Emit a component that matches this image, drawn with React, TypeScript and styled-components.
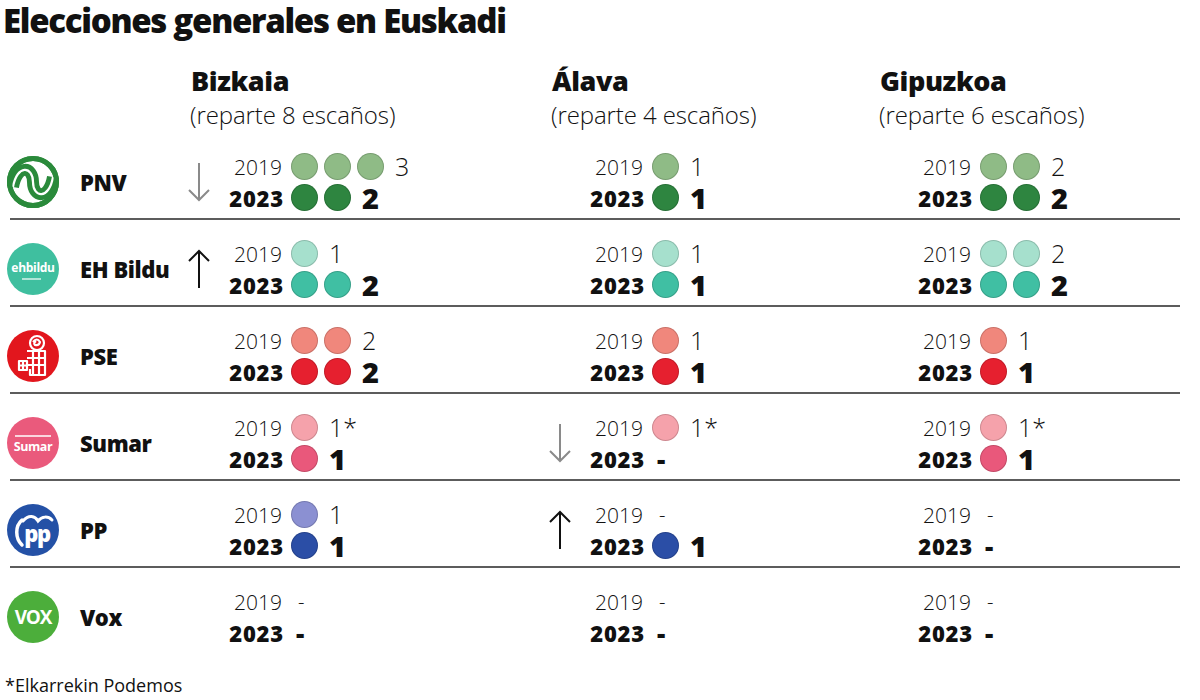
import React from 'react';
import styled, { createGlobalStyle } from 'styled-components';

const GlobalStyle = createGlobalStyle`
  html, body { margin: 0; padding: 0; background: #fff; }
  body {
    font-family: "Open Sans", "Liberation Sans", sans-serif;
    color: #111;
    width: 1200px;
    height: 700px;
    overflow: hidden;
  }
`;

interface Cell { s19: number; s23: number; arrow?: 'up' | 'down'; star?: boolean }
interface Party { key: string; name: string; c19: string; c23: string; cells: Cell[] }

const regions = [
  { name: 'Bizkaia', seats: 8 },
  { name: 'Álava', seats: 4 },
  { name: 'Gipuzkoa', seats: 6 },
];

const parties: Party[] = [
  { key: 'pnv', name: 'PNV', c19: '#8fbb86', c23: '#2e8540',
    cells: [{ s19: 3, s23: 2, arrow: 'down' }, { s19: 1, s23: 1 }, { s19: 2, s23: 2 }] },
  { key: 'bildu', name: 'EH Bildu', c19: '#a6e0cd', c23: '#40bfa3',
    cells: [{ s19: 1, s23: 2, arrow: 'up' }, { s19: 1, s23: 1 }, { s19: 2, s23: 2 }] },
  { key: 'pse', name: 'PSE', c19: '#f0877c', c23: '#e6202f',
    cells: [{ s19: 2, s23: 2 }, { s19: 1, s23: 1 }, { s19: 1, s23: 1 }] },
  { key: 'sumar', name: 'Sumar', c19: '#f5a2ab', c23: '#e9587b',
    cells: [{ s19: 1, s23: 1, star: true }, { s19: 1, s23: 0, arrow: 'down', star: true }, { s19: 1, s23: 1, star: true }] },
  { key: 'pp', name: 'PP', c19: '#8b90d2', c23: '#2b4ea6',
    cells: [{ s19: 1, s23: 1 }, { s19: 0, s23: 1, arrow: 'up' }, { s19: 0, s23: 0 }] },
  { key: 'vox', name: 'Vox', c19: '#cccccc', c23: '#4aae3c',
    cells: [{ s19: 0, s23: 0 }, { s19: 0, s23: 0 }, { s19: 0, s23: 0 }] },
];

const Page = styled.div`
  width: 1200px;
  height: 700px;
  display: flex;
  flex-direction: column;
  background: #fff;
`;

const Title = styled.h1`
  margin: 0;
  padding-left: 3px;
  font-size: 33px;
  line-height: 45px;
  margin-top: -2px;
  font-weight: 800;
  letter-spacing: -1.3px;
  color: #111;
  white-space: nowrap;
`;

const Grid = styled.div`
  display: grid;
  grid-template-columns: 190px 361px 328px 1fr;
`;

const HeaderRow = styled(Grid)`
  padding-top: 23px;
  padding-bottom: 3px;
`;

const RegionHead = styled.div`
  display: flex;
  flex-direction: column;
  gap: 4px;
`;

const RegionName = styled.div`
  font-size: 27px;
  line-height: 30px;
  font-weight: 800;
  letter-spacing: -0.4px;
  padding-left: 1px;
`;

const RegionSub = styled.div`
  font-size: 24px;
  line-height: 30px;
  font-weight: 300;
  letter-spacing: -0.1px;
  white-space: nowrap;
`;

const PartyRow = styled(Grid)`
  height: 85px;
  box-sizing: border-box;
  padding-top: 18px;
  align-items: start;
`;

const Divider = styled.div`
  height: 2px;
  margin-left: 10px;
  width: 1170px;
  background: #5c5c5c;
`;

const PartyCell = styled.div`
  display: flex;
  align-items: center;
  height: 62px;
  padding-left: 7px;
  gap: 21px;
`;

const PartyName = styled.div`
  font-size: 22px;
  font-weight: 800;
  letter-spacing: -0.4px;
  white-space: nowrap;
`;

const CellGrid = styled.div`
  display: grid;
  grid-template-columns: 32px 61px auto;
  grid-template-rows: 31px 31px;
`;

const ArrowBox = styled.div`
  grid-row: 1 / span 2;
  grid-column: 1;
  display: flex;
  align-items: center;
  justify-content: flex-start;
  margin-left: -2px;
`;

const Year = styled.div<{ $bold?: boolean }>`
  display: flex;
  align-items: center;
  justify-content: flex-end;
  font-size: ${(p) => (p.$bold ? '22px' : '21px')};
  font-weight: ${(p) => (p.$bold ? 800 : 300)};
  letter-spacing: ${(p) => (p.$bold ? '0.8px' : '0px')};
  margin-right: ${(p) => (p.$bold ? '-1px' : '1px')};
  white-space: nowrap;
`;

const Values = styled.div`
  display: flex;
  align-items: center;
  gap: 6px;
  padding-left: 8px;
`;

const Dot = styled.span<{ $color: string }>`
  width: 27px;
  height: 27px;
  border-radius: 50%;
  background: ${(p) => p.$color};
  box-shadow: inset 0 0 0 1px rgba(0, 0, 0, 0.16);
  flex: none;
`;

const Num = styled.span<{ $bold?: boolean }>`
  margin-left: 5px;
  font-size: ${(p) => (p.$bold ? '29px' : '25px')};
  font-weight: ${(p) => (p.$bold ? 800 : 300)};
  line-height: 1;
  white-space: nowrap;
`;

const Dash = styled.span<{ $bold?: boolean }>`
  margin-left: ${(p) => (p.$bold ? '5px' : '7px')};
  font-size: ${(p) => (p.$bold ? '26px' : '20px')};
  font-weight: ${(p) => (p.$bold ? 800 : 300)};
  line-height: 1;
`;

const Footnote = styled.div`
  margin-top: 20px;
  padding-left: 5px;
  font-size: 18px;
  line-height: 24px;
  font-weight: 400;
  letter-spacing: 0;
`;

const ArrowIcon: React.FC<{ dir: 'up' | 'down' }> = ({ dir }) => {
  const color = dir === 'up' ? '#111' : '#8a8a8a';
  return (
    <svg width="22" height="40" viewBox="0 0 22 40">
      {dir === 'down' ? (
        <>
          <line x1="11" y1="1" x2="11" y2="38" stroke={color} strokeWidth="2" />
          <polyline points="1,28 11,38 21,28" fill="none" stroke={color} strokeWidth="2" />
        </>
      ) : (
        <>
          <line x1="11" y1="2" x2="11" y2="39" stroke={color} strokeWidth="2" />
          <polyline points="1,12 11,2 21,12" fill="none" stroke={color} strokeWidth="2" />
        </>
      )}
    </svg>
  );
};

const Logo: React.FC<{ party: string }> = ({ party }) => {
  switch (party) {
    case 'pnv':
      return (
        <svg width="52" height="52" viewBox="0 0 52 52">
          <circle cx="26" cy="26" r="23.5" fill="#fff" stroke="#2a8a3b" strokeWidth="5" />
          <path d="M6 31 C 10 8, 26 10, 26 26 S 42 44, 46 21" fill="none" stroke="#2a8a3b" strokeWidth="12" />
          <path d="M6 31 C 10 8, 26 10, 26 26 S 42 44, 46 21" fill="none" stroke="#fff" strokeWidth="2.2" />
          <circle cx="26" cy="26" r="23.5" fill="none" stroke="#2a8a3b" strokeWidth="5" />
        </svg>
      );
    case 'bildu':
      return (
        <svg width="52" height="52" viewBox="0 0 52 52">
          <circle cx="26" cy="26" r="26" fill="#3fbf9f" />
          <text x="26" y="29" textAnchor="middle" fontFamily="Open Sans, sans-serif" fontWeight="700" fontSize="12" fill="#fff" letterSpacing="-0.3">ehbildu</text>
          <line x1="15" y1="36" x2="34" y2="36" stroke="#fff" strokeWidth="1.2" />
        </svg>
      );
    case 'pse':
      return (
        <svg width="52" height="52" viewBox="0 0 52 52">
          <circle cx="26" cy="26" r="26" fill="#e2161d" />
          <g fill="none" stroke="#fff" strokeWidth="2.2" strokeLinejoin="round">
            <circle cx="30" cy="13" r="7" />
            <path d="M26 12 q4 -5 7 0 q-1 4 -5 3 q-2 -2 1 -4" />
            <path d="M20 21 h18 v24 h-15 v-6" />
            <path d="M26 21 v24 M32 21 v24 M20 28 h18 M20 35 h18" />
            <path d="M12 31 h8 v9 h-8 z" />
            <path d="M16 32 v7 M13 35.5 h6" />
          </g>
        </svg>
      );
    case 'sumar':
      return (
        <svg width="52" height="52" viewBox="0 0 52 52">
          <circle cx="26" cy="26" r="26" fill="#ea5a7c" />
          <line x1="8" y1="19" x2="44" y2="19" stroke="#fff" strokeWidth="1.6" />
          <text x="26" y="34" textAnchor="middle" fontFamily="Open Sans, sans-serif" fontWeight="700" fontSize="12.5" fill="#fff" letterSpacing="-0.4">Sumar</text>
        </svg>
      );
    case 'pp':
      return (
        <svg width="52" height="52" viewBox="0 0 52 52">
          <circle cx="26" cy="26" r="26" fill="#2451a6" />
          <path d="M15 16 C 8 22, 8 34, 15 41" fill="none" stroke="#fff" strokeWidth="3.5" strokeLinecap="round" />
          <path d="M16 17 C 22 10, 28 12, 31 17 C 35 12, 41 12, 45 16" fill="none" stroke="#fff" strokeWidth="3" strokeLinecap="round" />
          <text x="30" y="38" textAnchor="middle" fontFamily="Open Sans, sans-serif" fontWeight="800" fontSize="22" fill="#fff" letterSpacing="-1.5">pp</text>
        </svg>
      );
    default:
      return (
        <svg width="52" height="52" viewBox="0 0 52 52">
          <circle cx="26" cy="26" r="26" fill="#4cae3b" />
          <text x="26" y="33" textAnchor="middle" fontFamily="Open Sans, sans-serif" fontWeight="700" fontSize="19" fill="#fff" letterSpacing="-1.2">VOX</text>
        </svg>
      );
  }
};

const SeatLine: React.FC<{ count: number; color: string; bold?: boolean; star?: boolean }> = ({ count, color, bold, star }) => {
  if (count === 0) {
    return (
      <Values>
        <Dash $bold={bold}>-</Dash>
      </Values>
    );
  }
  return (
    <Values>
      {Array.from({ length: count }).map((_, i) => (
        <Dot key={i} $color={color} />
      ))}
      <Num $bold={bold}>{star ? `${count}*` : count}</Num>
    </Values>
  );
};

const ResultCell: React.FC<{ cell: Cell; party: Party }> = ({ cell, party }) => (
  <CellGrid>
    <ArrowBox>{cell.arrow && <ArrowIcon dir={cell.arrow} />}</ArrowBox>
    <Year>2019</Year>
    <SeatLine count={cell.s19} color={party.c19} star={cell.star} />
    <Year $bold>2023</Year>
    <SeatLine count={cell.s23} color={party.c23} bold />
  </CellGrid>
);

export default function App() {
  return (
    <Page>
      <GlobalStyle />
      <Title>Elecciones generales en Euskadi</Title>
      <HeaderRow>
        <div />
        {regions.map((r) => (
          <RegionHead key={r.name}>
            <RegionName>{r.name}</RegionName>
            <RegionSub>(reparte {r.seats} escaños)</RegionSub>
          </RegionHead>
        ))}
      </HeaderRow>
      {parties.map((p, i) => (
        <React.Fragment key={p.key}>
          {i > 0 && <Divider />}
          <PartyRow>
            <PartyCell>
              <Logo party={p.key} />
              <PartyName>{p.name}</PartyName>
            </PartyCell>
            {p.cells.map((c, j) => (
              <ResultCell key={j} cell={c} party={p} />
            ))}
          </PartyRow>
        </React.Fragment>
      ))}
      <Footnote>*Elkarrekin Podemos</Footnote>
    </Page>
  );
}
